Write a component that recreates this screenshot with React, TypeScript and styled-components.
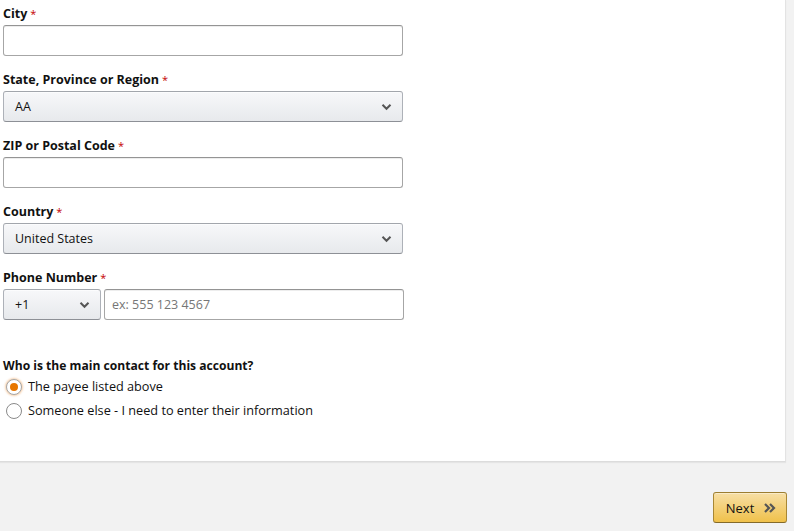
import React from 'react';
import styled, {createGlobalStyle} from 'styled-components';

const GlobalStyle = createGlobalStyle`
  html, body {
    margin: 0;
    padding: 0;
    background: #f2f2f2;
  }
  body {
    font-family: 'Open Sans', 'Liberation Sans', Arial, sans-serif;
    color: #111;
    font-size: 13px;
  }
`;

const Page = styled.div`
  width: 794px;
  height: 531px;
  display: flex;
  flex-direction: column;
  overflow: hidden;
`;

const Card = styled.div`
  width: 786px;
  height: 462px;
  box-sizing: border-box;
  background: #fff;
  border-right: 1px solid #e3e3e3;
  border-bottom: 1px solid #dcdcdc;
  box-shadow: 0 1px 1px rgba(0, 0, 0, 0.05);
  padding: 4px 0 0 3px;
`;

const Field = styled.div`
  width: 400px;
  margin-bottom: 14px;
`;

const Label = styled.div`
  font-weight: 700;
  font-size: 12.5px;
  line-height: 19px;
  margin-bottom: 2px;
`;

const Required = styled.span`
  color: #c40000;
  font-weight: 400;
  font-size: 11px;
  margin-left: 3px;
`;

const TextInput = styled.input`
  box-sizing: border-box;
  width: 400px;
  height: 31px;
  border: 1px solid #a6a6a6;
  border-top-color: #949494;
  border-radius: 3px;
  box-shadow: 0 1px 0 rgba(255, 255, 255, 0.5), 0 1px 0 rgba(0, 0, 0, 0.07) inset;
  padding: 0 7px;
  font-family: inherit;
  font-size: 12.5px;
  color: #111;
  outline: none;
  &::placeholder {
    color: #767676;
  }
`;

const PhoneInput = styled(TextInput)`
  flex: 1;
  width: auto;
  min-width: 0;
`;

const SelectBox = styled.div<{w?: number}>`
  box-sizing: border-box;
  width: ${p => (p.w ? `${p.w}px` : '100%')};
  height: 31px;
  flex-shrink: 0;
  display: flex;
  align-items: center;
  justify-content: space-between;
  padding: 0 10px 0 11px;
  border: 1px solid #adb1b8;
  border-bottom-color: #8d9096;
  border-top-color: #a2a6ac;
  border-radius: 3px;
  background: linear-gradient(to bottom, #f7f8fa, #e7e9ec);
  box-shadow: 0 1px 0 rgba(255, 255, 255, 0.6) inset;
  font-size: 12.5px;
  color: #111;
`;

const Chevron = () => (
  <svg width="11" height="8" viewBox="0 0 11 8">
    <path d="M1.5 1.8 L5.5 5.8 L9.5 1.8" fill="none" stroke="#555" strokeWidth="2" />
  </svg>
);

const PhoneRow = styled.div`
  display: flex;
  gap: 3px;
  width: 401px;
`;

const Question = styled.div`
  margin-top: 36px;
  font-weight: 700;
  font-size: 12.1px;
  line-height: 19px;
`;

const RadioList = styled.div`
  display: flex;
  flex-direction: column;
  gap: 5px;
  margin-top: 2px;
`;

const RadioRow = styled.label`
  display: flex;
  align-items: center;
  gap: 6px;
  padding-left: 3px;
  font-size: 12.7px;
  line-height: 19px;
  color: #111;
`;

const RadioDot = styled.span<{checked?: boolean}>`
  box-sizing: border-box;
  width: 16px;
  height: 16px;
  border-radius: 50%;
  border: 1px solid ${p => (p.checked ? '#a6a6a6' : '#8a8a8a')};
  background: #fff;
  display: flex;
  align-items: center;
  justify-content: center;
  box-shadow: ${p => (p.checked ? '0 0 2px 1px rgba(228, 121, 17, 0.35)' : 'none')};
  &::after {
    content: '';
    display: ${p => (p.checked ? 'block' : 'none')};
    width: 8px;
    height: 8px;
    border-radius: 50%;
    background: #e77600;
  }
`;

const Footer = styled.div`
  flex: 1;
  display: flex;
  justify-content: flex-end;
  align-items: flex-end;
  padding: 0 7px 8px 0;
`;

const NextButton = styled.button`
  box-sizing: border-box;
  width: 74px;
  height: 31px;
  display: flex;
  align-items: center;
  justify-content: center;
  gap: 10px;
  border: 1px solid #a88734;
  border-top-color: #9c7e31;
  border-bottom-color: #846a29;
  border-radius: 3px;
  background: linear-gradient(to bottom, #f7dfa5, #f0c14b);
  box-shadow: 0 1px 0 rgba(255, 255, 255, 0.4) inset;
  font-family: inherit;
  font-size: 13px;
  color: #111;
  padding: 0 0 0 2px;
`;

const DoubleChevron = () => (
  <svg width="12" height="10" viewBox="0 0 12 10">
    <path d="M1 1 L5 5 L1 9 M6 1 L10 5 L6 9" fill="none" stroke="#555" strokeWidth="2.2" />
  </svg>
);

const Req = () => <Required>*</Required>;

export default function App() {
  return (
    <>
      <GlobalStyle />
      <Page>
        <Card>
          <Field>
            <Label>City<Req /></Label>
            <TextInput />
          </Field>
          <Field>
            <Label>State, Province or Region<Req /></Label>
            <SelectBox>
              <span>AA</span>
              <Chevron />
            </SelectBox>
          </Field>
          <Field>
            <Label>ZIP or Postal Code<Req /></Label>
            <TextInput />
          </Field>
          <Field>
            <Label>Country<Req /></Label>
            <SelectBox>
              <span>United States</span>
              <Chevron />
            </SelectBox>
          </Field>
          <Field>
            <Label>Phone Number<Req /></Label>
            <PhoneRow>
              <SelectBox w={98}>
                <span>+1</span>
                <Chevron />
              </SelectBox>
              <PhoneInput placeholder="ex: 555 123 4567" />
            </PhoneRow>
          </Field>
          <Question>Who is the main contact for this account?</Question>
          <RadioList>
            <RadioRow>
              <RadioDot checked />
              The payee listed above
            </RadioRow>
            <RadioRow>
              <RadioDot />
              Someone else - I need to enter their information
            </RadioRow>
          </RadioList>
        </Card>
        <Footer>
          <NextButton>
            Next
            <DoubleChevron />
          </NextButton>
        </Footer>
      </Page>
    </>
  );
}
